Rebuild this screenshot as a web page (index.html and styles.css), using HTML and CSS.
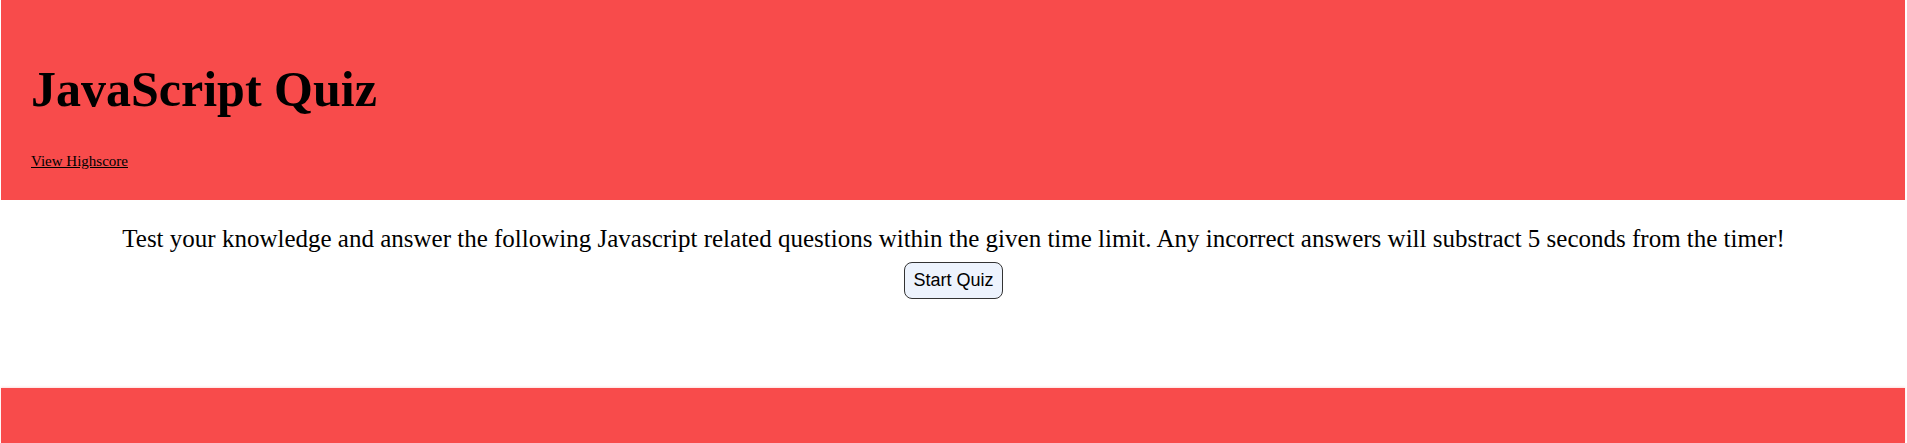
FILE: index.html
```html
<!DOCTYPE html>
<html lang="en">
<head>
<meta charset="utf-8">
<title>JavaScript Quiz</title>
<link rel="stylesheet" href="styles.css">
</head>
<body>
<header class="site-header">
  <h1 class="title">JavaScript Quiz</h1>
  <a class="highscore-link" href="#">View Highscore</a>
</header>
<main class="intro">
  <p class="intro-text">Test your knowledge and answer the following Javascript related questions within the given time limit. Any incorrect answers will substract 5 seconds from the timer!</p>
  <button class="start-btn" type="button">Start Quiz</button>
</main>
<footer class="site-footer"></footer>
</body>
</html>
```

FILE: styles.css
```css
html, body {
  margin: 0;
  padding: 0;
  background: #ffffff;
}

body {
  font-family: "Liberation Serif", "Times New Roman", serif;
  color: #000;
  display: flex;
  flex-direction: column;
  height: 443px;
  overflow: hidden;
}

.site-header {
  background: #f84b4b;
  margin: 0 2px 0 1px;
  height: 200px;
  flex: none;
  box-sizing: border-box;
  padding: 64px 30px 0 30px;
  display: flex;
  flex-direction: column;
  align-items: flex-start;
}

.title {
  margin: 0;
  font-size: 50px;
  line-height: 50px;
  font-weight: bold;
}

.highscore-link {
  margin-top: 40px;
  font-size: 15px;
  line-height: 15px;
  color: #000;
  text-decoration: underline;
}

.intro {
  display: flex;
  flex-direction: column;
  align-items: center;
  padding-top: 26px;
  height: 188px;
  flex: none;
  box-sizing: border-box;
}

.intro-text {
  margin: 0;
  font-size: 25px;
  line-height: 25px;
  text-align: center;
}

.start-btn {
  margin-top: 11px;
  font-family: "Liberation Sans", Arial, sans-serif;
  font-size: 18px;
  line-height: 21px;
  padding: 7px 8px;
  color: #000;
  background: #edf3fd;
  border: 1px solid #333;
  border-radius: 8px;
  cursor: pointer;
}

.site-footer {
  background: #f84b4b;
  margin: 0 2px 0 1px;
  flex: 1;
  box-shadow: 0 -1px 2px rgba(248, 75, 75, 0.18);
}
```
